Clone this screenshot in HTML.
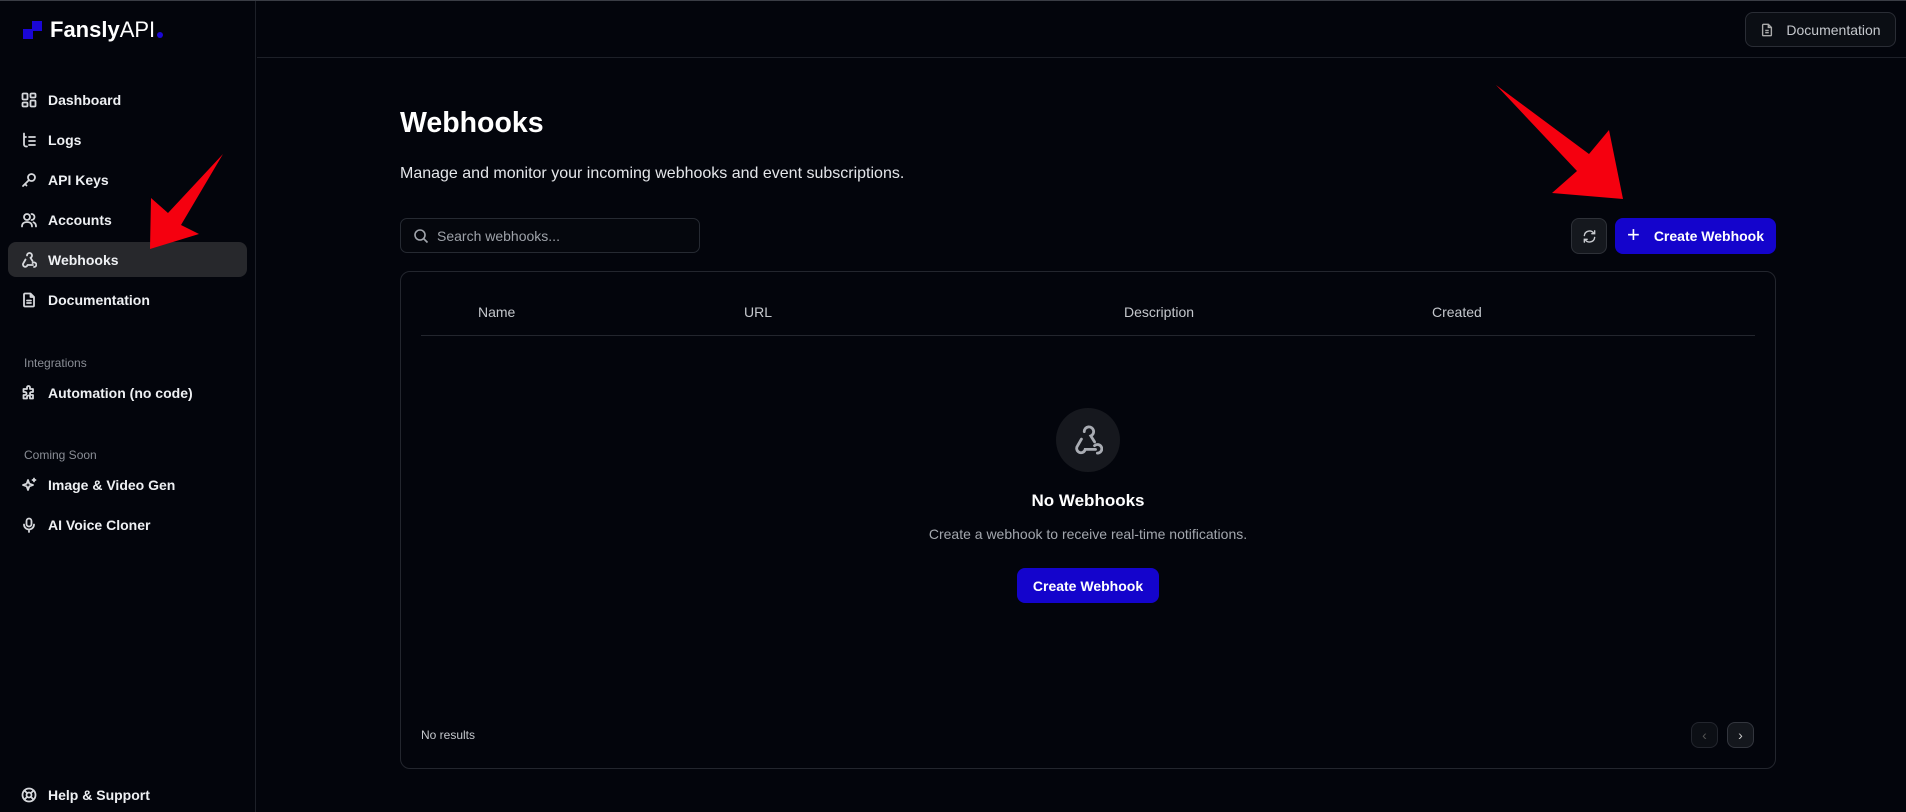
<!DOCTYPE html>
<html><head><meta charset="utf-8"><style>
*{box-sizing:border-box;margin:0;padding:0}
body{width:1906px;height:811px;background:#03050c;font-family:"Liberation Sans",sans-serif;color:#f2f3f5;position:relative;overflow:hidden;border-top:1px solid #3a3d45}
.a{position:absolute}
.side{left:0;top:0;width:256px;height:811px;border-right:1px solid #1d2028}
.nav{position:absolute;left:8px;width:239px;height:35px;display:flex;align-items:center;font-size:14px;font-weight:bold;color:#eef0f3;border-radius:8px}
.nav svg{position:absolute;left:13px;width:16px;height:16px;fill:none;stroke:#d6d8dc;stroke-width:1.8;stroke-linecap:round;stroke-linejoin:round}
.nav span{position:absolute;left:40px}
.lbl{position:absolute;left:24px;font-size:12px;color:#8a8e96}
.hdr{left:257px;top:0;right:0;height:57px;border-bottom:1px solid #1d2028}
.btn{position:absolute;border-radius:8px;display:flex;align-items:center;justify-content:center}
.th{position:absolute;top:303px;font-size:14px;color:#c4c7cc}
</style></head><body>
<div class="a side">
  <svg class="a" style="left:23px;top:19px" width="21" height="21"><rect x="0" y="9" width="10" height="10" fill="#1a06d6"/><rect x="9" y="1" width="10" height="10" fill="#1a06d6"/></svg>
  <div class="a" style="left:50px;top:16px;font-size:22px;color:#fff"><b>Fansly</b>API</div>
  <div class="a" style="left:157px;top:31px;width:6px;height:6px;border-radius:3px;background:#1a06d6"></div>

  <div class="nav" style="top:81px"><svg viewBox="0 0 16 16"><rect x="1.5" y="1.5" width="5" height="6" rx="1"/><rect x="9.5" y="1.5" width="5" height="4" rx="1"/><rect x="1.5" y="10.5" width="5" height="4" rx="1"/><rect x="9.5" y="8.5" width="5" height="6" rx="1"/></svg><span>Dashboard</span></div>
  <div class="nav" style="top:121px"><svg viewBox="0 0 16 16"><path d="M3 1.5v11a2 2 0 0 0 2 2h1M3 5h2M8 5h6M8 9h6M8 13h6"/></svg><span>Logs</span></div>
  <div class="nav" style="top:161px"><svg viewBox="0 0 16 16"><circle cx="10.5" cy="5.5" r="3.5"/><path d="M8 8l-6 6M4 12l1.5 1.5"/></svg><span>API Keys</span></div>
  <div class="nav" style="top:201px"><svg viewBox="0 0 16 16"><circle cx="6" cy="5" r="3"/><path d="M1 14.5c0-3 2.2-4.5 5-4.5s5 1.5 5 4.5M10.5 2a3 3 0 0 1 0 6M12.5 10.3c1.5.6 2.5 2 2.5 4.2"/></svg><span>Accounts</span></div>
  <div class="nav" style="top:241px;background:#27282c"><svg viewBox="0 0 16 16"><path d="M6 3.5a2.5 2.5 0 1 1 3.5 2.3L11.5 9M4.5 7.5L2.5 11a2.3 2.3 0 1 0 4 2h5.5M13 15a2.3 2.3 0 1 0-1.5-4"/></svg><span>Webhooks</span></div>
  <div class="nav" style="top:281px"><svg viewBox="0 0 16 16"><path d="M9.5 1.5H4a1 1 0 0 0-1 1v11a1 1 0 0 0 1 1h8a1 1 0 0 0 1-1V5z M9.5 1.5V5H13M6 8.5h4M6 11h4"/></svg><span>Documentation</span></div>

  <div class="lbl" style="top:355px">Integrations</div>
  <div class="nav" style="top:374px"><svg viewBox="0 0 16 16"><path d="M6 2.5a1.5 1.5 0 0 1 3 0V4h3v3h-1.5a1.5 1.5 0 0 0 0 3H12v3.5H9V12a1.5 1.5 0 0 0-3 0v1.5H2.5V10H4a1.5 1.5 0 0 0 0-3H2.5V4H6z"/></svg><span>Automation (no code)</span></div>
  <div class="lbl" style="top:447px">Coming Soon</div>
  <div class="nav" style="top:466px"><svg viewBox="0 0 16 16"><path d="M7 3l1.3 3.7L12 8l-3.7 1.3L7 13l-1.3-3.7L2 8l3.7-1.3zM13 1.5v3M11.5 3h3"/></svg><span>Image &amp; Video Gen</span></div>
  <div class="nav" style="top:506px"><svg viewBox="0 0 16 16"><rect x="5.5" y="1.5" width="5" height="8" rx="2.5"/><path d="M3 7.5a5 5 0 0 0 10 0M8 12.5v2.5"/></svg><span>AI Voice Cloner</span></div>
  <div class="nav" style="top:776px"><svg viewBox="0 0 16 16"><circle cx="8" cy="8" r="6.5"/><circle cx="8" cy="8" r="2.5"/><path d="M3.4 3.4l2.8 2.8M9.8 9.8l2.8 2.8M12.6 3.4L9.8 6.2M6.2 9.8l-2.8 2.8"/></svg><span>Help &amp; Support</span></div>
</div>

<div class="a hdr"></div>
<div class="btn" style="left:1745px;top:11px;width:151px;height:35px;border:1px solid #2a2d35;background:#0b0e14;color:#c4c7cc;font-size:14px"><svg width="14" height="14" viewBox="0 0 16 16" style="margin-right:12px;fill:none;stroke:#aaa;stroke-width:1.6"><path d="M9.5 1.5H4a1 1 0 0 0-1 1v11a1 1 0 0 0 1 1h8a1 1 0 0 0 1-1V5z M9.5 1.5V5H13M6 8.5h4M6 11h4"/></svg>Documentation</div>

<div class="a" style="left:400px;top:106px;font-size:28.5px;font-weight:bold;color:#fff">Webhooks</div>
<div class="a" style="left:400px;top:164px;font-size:16px;color:#e4e6ea">Manage and monitor your incoming webhooks and event subscriptions.</div>

<div class="a" style="left:400px;top:217px;width:300px;height:35px;border:1px solid #262a32;border-radius:7px;background:#05070d"></div>
<svg class="a" style="left:413px;top:227px" width="16" height="16" viewBox="0 0 16 16" fill="none" stroke="#a0a4ab" stroke-width="1.6"><circle cx="7" cy="7" r="5"/><path d="M11 11l3.5 3.5"/></svg>
<div class="a" style="left:437px;top:227px;font-size:14px;color:#9ea2a9">Search webhooks...</div>

<div class="btn" style="left:1571px;top:217px;width:36px;height:36px;border:1px solid #2e3138;background:#15181e"><svg width="15" height="15" viewBox="0 0 16 16" fill="none" stroke="#c8cacf" stroke-width="1.5" stroke-linecap="round"><path d="M2.5 7a5.5 5.5 0 0 1 10-2.5M13.5 2v3h-3M13.5 9a5.5 5.5 0 0 1-10 2.5M2.5 14v-3h3"/></svg></div>
<div class="btn" style="left:1615px;top:217px;width:161px;height:36px;background:#1404cc;color:#fff;font-size:14px;font-weight:bold"><span style="font-size:22px;font-weight:normal;margin-right:14px;margin-top:-3px">+</span>Create Webhook</div>

<div class="a" style="left:400px;top:270px;width:1376px;height:498px;border:1px solid #23262e;border-radius:10px;background:#03050c"></div>
<div class="th" style="left:478px">Name</div>
<div class="th" style="left:744px">URL</div>
<div class="th" style="left:1124px">Description</div>
<div class="th" style="left:1432px">Created</div>
<div class="a" style="left:421px;top:334px;width:1334px;height:1px;background:#23262e"></div>

<div class="a" style="left:1056px;top:407px;width:64px;height:64px;border-radius:32px;background:#16181e"></div>
<svg class="a" style="left:1073px;top:424px" width="30" height="30" viewBox="0 0 16 16" fill="none" stroke="#a9acb3" stroke-width="1.5" stroke-linecap="round"><path d="M6 3.5a2.5 2.5 0 1 1 3.5 2.3L11.5 9M4.5 7.5L2.5 11a2.3 2.3 0 1 0 4 2h5.5M13 15a2.3 2.3 0 1 0-1.5-4"/></svg>
<div class="a" style="left:888px;top:490px;width:400px;text-align:center;font-size:17px;font-weight:bold;color:#fff">No Webhooks</div>
<div class="a" style="left:838px;top:525px;width:500px;text-align:center;font-size:14px;color:#a3a7ae">Create a webhook to receive real-time notifications.</div>
<div class="btn" style="left:1017px;top:567px;width:142px;height:35px;background:#1404cc;color:#fff;font-size:14px;font-weight:bold">Create Webhook</div>

<div class="a" style="left:421px;top:727px;font-size:12px;color:#c4c7cc">No results</div>
<div class="btn" style="left:1691px;top:721px;width:27px;height:26px;border:1px solid #23262e;background:#0c0f15;color:#555;font-size:14px">‹</div>
<div class="btn" style="left:1727px;top:721px;width:27px;height:26px;border:1px solid #33363e;background:#14171d;color:#ccc;font-size:14px">›</div>

<svg class="a" style="left:0;top:0" width="1906" height="811">
<polygon fill="#f5000f" points="150,248 151,197 168,212 223,153 181,224 199,233"/>
<polygon fill="#f5000f" points="1623,198 1552,192 1577,170 1496,84 1589,153 1609,129"/>
</svg>
</body></html>
